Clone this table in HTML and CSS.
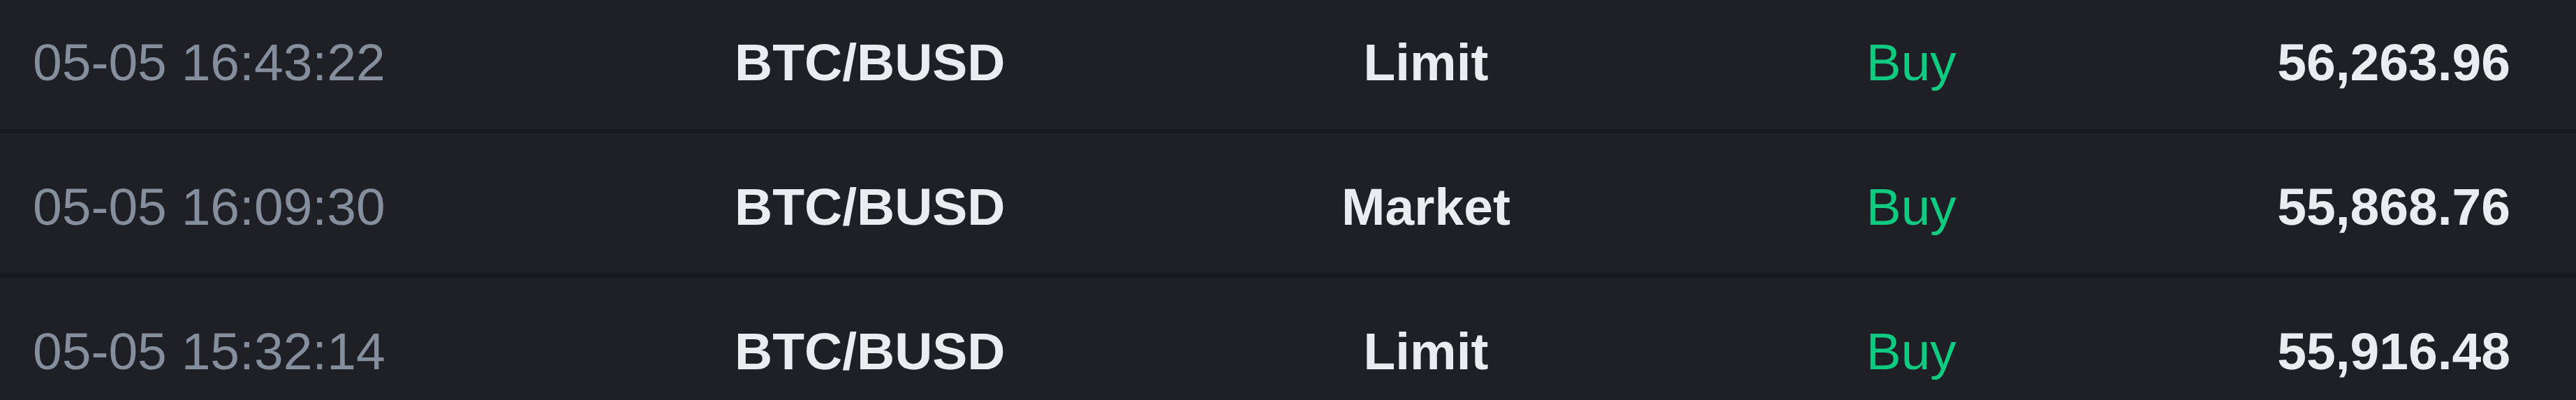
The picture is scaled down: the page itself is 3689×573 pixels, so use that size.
FILE: index.html
```html
<!DOCTYPE html>
<html lang="en">
<head>
<meta charset="utf-8">
<title>Order history</title>
<link rel="stylesheet" href="styles.css">
</head>
<body>
  <div class="orders">
    <div class="row">
      <div class="cell time">05-05 16:43:22</div>
      <div class="cell pair">BTC/BUSD</div>
      <div class="cell type">Limit</div>
      <div class="cell side buy">Buy</div>
      <div class="cell price">56,263.96</div>
    </div>
    <div class="row">
      <div class="cell time">05-05 16:09:30</div>
      <div class="cell pair">BTC/BUSD</div>
      <div class="cell type">Market</div>
      <div class="cell side buy">Buy</div>
      <div class="cell price">55,868.76</div>
    </div>
    <div class="row">
      <div class="cell time">05-05 15:32:14</div>
      <div class="cell pair">BTC/BUSD</div>
      <div class="cell type">Limit</div>
      <div class="cell side buy">Buy</div>
      <div class="cell price">55,916.48</div>
    </div>
  </div>
</body>
</html>
```
FILE: styles.css
```css
html, body {
  margin: 0;
  padding: 0;
  background: #1f2026;
  overflow: hidden;
}

body {
  width: 3689px;
  height: 573px;
  font-family: "Liberation Sans", Arial, sans-serif;
  font-size: 75px;
  color: #eaecef;
}

.orders {
  margin-top: -16px;
}

.row {
  box-sizing: border-box;
  height: 207px;
  padding: 9px 94px 0 47px;
  border-bottom: 6px solid #18191d;
  display: grid;
  grid-template-columns: 1005px 648px 684px 706px 1fr;
  align-items: center;
  white-space: nowrap;
}

.time {
  color: #848e9c;
  font-weight: 400;
}

.pair {
  font-weight: 700;
}

.type {
  font-weight: 700;
  text-align: center;
}

.side {
  text-align: center;
  font-weight: 400;
}

.buy {
  color: #0ecb81;
}

.price {
  font-weight: 700;
  text-align: right;
}
```
